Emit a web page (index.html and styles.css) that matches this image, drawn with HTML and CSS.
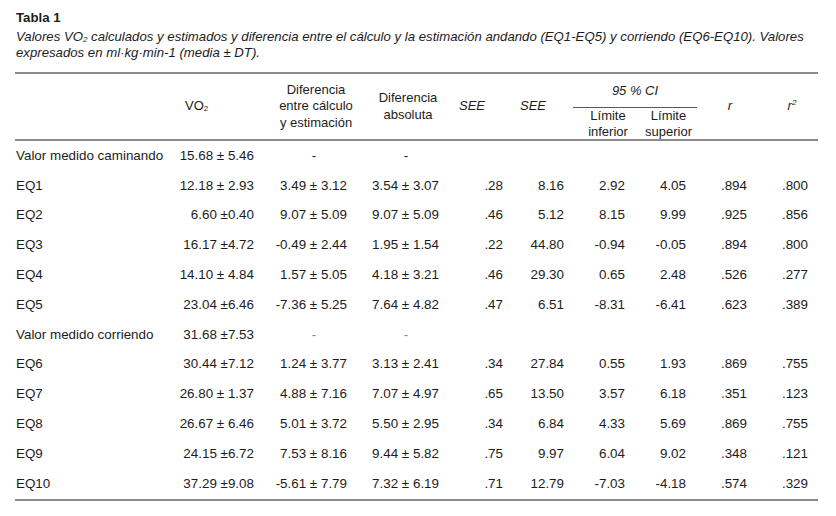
FILE: index.html
```html
<!DOCTYPE html>
<html lang="es">
<head>
<meta charset="utf-8">
<title>Tabla 1</title>
<link rel="stylesheet" href="styles.css">
</head>
<body>
<div class="page">
  <div class="title">Tabla 1</div>
  <div class="caption">Valores VO<sub>2</sub> calculados y estimados y diferencia entre el cálculo y la estimación andando (EQ1-EQ5) y corriendo (EQ6-EQ10). Valores<br>expresados en ml·kg·min-1 (media ± DT).</div>
  <table class="data">
    <colgroup>
      <col class="c0"><col class="c1"><col class="c2"><col class="c3"><col class="c4"><col class="c5"><col class="c6"><col class="c7"><col class="c8"><col class="c9">
    </colgroup>
    <thead>
      <tr class="h1">
        <th rowspan="2" class="hb"></th>
        <th rowspan="2" class="hb h-vo">VO<sub>2</sub></th>
        <th rowspan="2" class="hb">Diferencia<br>entre cálculo<br>y estimación</th>
        <th rowspan="2" class="hb">Diferencia<br>absoluta</th>
        <th rowspan="2" class="hb it h-see1">SEE</th>
        <th rowspan="2" class="hb it h-see2">SEE</th>
        <th colspan="2" class="it ci">95 % CI</th>
        <th rowspan="2" class="hb it h-r">r</th>
        <th rowspan="2" class="hb it h-r2">r<sup>2</sup></th>
      </tr>
      <tr class="h2">
        <th class="hb h-inf">Límite<br>inferior</th>
        <th class="hb h-sup">Límite<br>superior</th>
      </tr>
    </thead>
    <tbody>
      <tr><td>Valor medido caminando</td><td>15.68 ± 5.46</td><td class="dash">-</td><td class="dash">-</td><td></td><td></td><td></td><td></td><td></td><td></td></tr>
      <tr><td>EQ1</td><td>12.18 ± 2.93</td><td>3.49 ± 3.12</td><td>3.54 ± 3.07</td><td>.28</td><td>8.16</td><td>2.92</td><td>4.05</td><td>.894</td><td>.800</td></tr>
      <tr><td>EQ2</td><td>6.60 ±0.40</td><td>9.07 ± 5.09</td><td>9.07 ± 5.09</td><td>.46</td><td>5.12</td><td>8.15</td><td>9.99</td><td>.925</td><td>.856</td></tr>
      <tr><td>EQ3</td><td>16.17 ±4.72</td><td>-0.49 ± 2.44</td><td>1.95 ± 1.54</td><td>.22</td><td>44.80</td><td>-0.94</td><td>-0.05</td><td>.894</td><td>.800</td></tr>
      <tr><td>EQ4</td><td>14.10 ± 4.84</td><td>1.57 ± 5.05</td><td>4.18 ± 3.21</td><td>.46</td><td>29.30</td><td>0.65</td><td>2.48</td><td>.526</td><td>.277</td></tr>
      <tr><td>EQ5</td><td>23.04 ±6.46</td><td>-7.36 ± 5.25</td><td>7.64 ± 4.82</td><td>.47</td><td>6.51</td><td>-8.31</td><td>-6.41</td><td>.623</td><td>.389</td></tr>
      <tr><td>Valor medido corriendo</td><td>31.68 ±7.53</td><td class="dash light">-</td><td class="dash light">-</td><td></td><td></td><td></td><td></td><td></td><td></td></tr>
      <tr><td>EQ6</td><td>30.44 ±7.12</td><td>1.24 ± 3.77</td><td>3.13 ± 2.41</td><td>.34</td><td>27.84</td><td>0.55</td><td>1.93</td><td>.869</td><td>.755</td></tr>
      <tr><td>EQ7</td><td>26.80 ± 1.37</td><td>4.88 ± 7.16</td><td>7.07 ± 4.97</td><td>.65</td><td>13.50</td><td>3.57</td><td>6.18</td><td>.351</td><td>.123</td></tr>
      <tr><td>EQ8</td><td>26.67 ± 6.46</td><td>5.01 ± 3.72</td><td>5.50 ± 2.95</td><td>.34</td><td>6.84</td><td>4.33</td><td>5.69</td><td>.869</td><td>.755</td></tr>
      <tr><td>EQ9</td><td>24.15 ±6.72</td><td>7.53 ± 8.16</td><td>9.44 ± 5.82</td><td>.75</td><td>9.97</td><td>6.04</td><td>9.02</td><td>.348</td><td>.121</td></tr>
      <tr><td>EQ10</td><td>37.29 ±9.08</td><td>-5.61 ± 7.79</td><td>7.32 ± 6.19</td><td>.71</td><td>12.79</td><td>-7.03</td><td>-4.18</td><td>.574</td><td>.329</td></tr>
    </tbody>
  </table>
</div>
</body>
</html>
```

FILE: styles.css
```css
html, body {
  margin: 0;
  padding: 0;
  background: #ffffff;
}
.page {
  padding: 10px 18px 0 15px;
  font-family: "Liberation Sans", Arial, Helvetica, sans-serif;
  color: #1c1c1c;
  font-size: 13px;
}
.title {
  font-weight: bold;
  font-size: 13.2px;
  line-height: 16px;
  padding-left: 1px;
  margin-bottom: 3px;
}
.caption {
  font-style: italic;
  font-size: 13.2px;
  line-height: 16px;
  padding-left: 1px;
}
.caption sub, th sub {
  font-size: 8px;
  line-height: 0;
  vertical-align: baseline;
  position: relative;
  top: 1px;
}
.data {
  margin-top: 11px;
  border-collapse: separate;
  border-spacing: 0;
  table-layout: fixed;
  width: 803px;
  border-top: 2px solid #8c8c8c;
  border-bottom: 2px solid #8c8c8c;
  font-size: 13px;
}
.c0 { width: 163px; }
.c1 { width: 90px; }
.c2 { width: 96px; }
.c3 { width: 88px; }
.c4 { width: 60px; }
.c5 { width: 61px; }
.c6 { width: 67px; }
.c7 { width: 57px; }
.c8 { width: 63px; }
.c9 { width: 58px; }

th {
  font-weight: normal;
  text-align: center;
  vertical-align: middle;
  line-height: 16.5px;
  padding: 0;
}
.it { font-style: italic; }
th sup {
  font-size: 8px;
  line-height: 0;
  vertical-align: baseline;
  position: relative;
  top: -5px;
}
.h1 th { height: 33px; }
.h2 th { height: 31px; line-height: 15.5px; }
.hb { border-bottom: 2px solid #8c8c8c; }
.ci {
  border-bottom: 1px solid #5a5a5a;
  line-height: 16px;
}
.h-vo { text-align: left; padding-left: 7px; }
.h-see1 { padding-right: 20px; }
.h-see2 { padding-right: 19px; }
.h-inf { padding-left: 3px; }
.h-r { padding-left: 3px; }
.h-r2 { padding-left: 6px; }

td {
  height: 29.8px;
  padding: 0;
  vertical-align: middle;
  text-align: right;
  white-space: nowrap;
  line-height: 16px;
  font-size: 13.4px;
}
td:nth-child(1) { text-align: left; padding-left: 1px; }
td:nth-child(2) { padding-right: 14px; }
td:nth-child(3) { padding-right: 17px; }
td:nth-child(4) { padding-right: 13px; }
td:nth-child(5) { padding-right: 9px; }
td:nth-child(6) { padding-right: 9px; }
td:nth-child(7) { padding-right: 15px; }
td:nth-child(8) { padding-right: 11px; }
td:nth-child(9) { padding-right: 13px; }
td:nth-child(10) { padding-right: 10px; }
td.dash { text-align: center; padding-right: 4px; }
td.light { color: #8a8a8a; }
```
